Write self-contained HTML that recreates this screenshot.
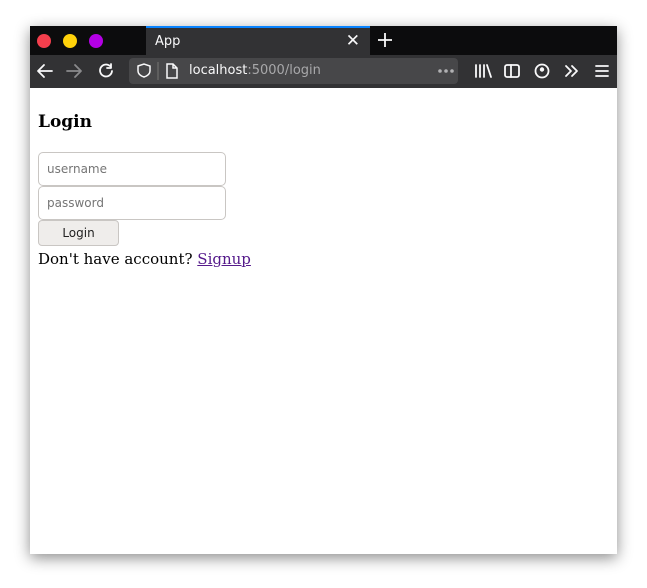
<!DOCTYPE html>
<html><head><style>
*{margin:0;padding:0;box-sizing:border-box}
body{width:647px;height:588px;background:#fff;position:relative;overflow:hidden;font-family:"DejaVu Sans","Liberation Sans",sans-serif}
.win{position:absolute;left:30px;top:26px;width:587px;height:528px;background:#fff;box-shadow:0 4px 14px rgba(0,0,0,.45)}
.tabs{position:absolute;left:0;top:0;width:587px;height:29px;background:#0c0c0d}
.dot{position:absolute;top:8px;width:14px;height:14px;border-radius:50%}
.tab{position:absolute;left:116px;top:0;width:224px;height:29px;background:#323234;border-top:2px solid #0a84ff;color:#f9f9fa;font-size:13px}
.tb{position:absolute;left:0;top:29px;width:587px;height:33px;background:#323234}
.url{position:absolute;left:99px;top:3px;width:329px;height:26px;background:#474749;border-radius:4px;color:#f9f9fa;font-size:13px}
.content{position:absolute;left:0;top:62px;width:587px;height:466px;font-family:"DejaVu Serif","Liberation Serif",serif}
input{position:absolute;left:8px;width:188px;height:34px;border:1px solid #c9c6c3;border-radius:5px;padding-left:8px;font:12px "DejaVu Sans",sans-serif;color:#888;background:#fff}
</style></head><body>
<div class="win">
 <div class="tabs">
  <div class="dot" style="left:7px;background:#f43f4d"></div>
  <div class="dot" style="left:33px;background:#ffd20a"></div>
  <div class="dot" style="left:59px;background:#b400e5"></div>
  <div class="tab"><span style="position:absolute;left:9px;top:6px">App</span><span style="position:absolute;right:10px;top:3px;font-size:17px">✕</span></div>
  <svg width="20" height="20" style="position:absolute;left:346px;top:5px" stroke="#f9f9fa" stroke-width="1.8"><path d="M9 2v14M2 9h14"/></svg>
 </div>
 <div class="tb">
  <svg width="587" height="33" style="position:absolute;left:0;top:0" fill="none" stroke-width="1.8" stroke-linecap="round" stroke-linejoin="round">
   <path d="M8 16h14M8 16l6-6M8 16l6 6" stroke="#f9f9fa"/>
   <path d="M37 16h14M51 16l-6-6M51 16l-6 6" stroke="#8a8a8c"/>
   <path d="M80 11a6 6 0 1 0 2 5M81 9v4h-4" stroke="#f9f9fa"/>
   <path d="M446 10v12M450 10v12M454 10v12M457 10l4 12" stroke="#f9f9fa"/>
   <rect x="475" y="10" width="14" height="12" rx="2" stroke="#f9f9fa"/><path d="M481 10v12" stroke="#f9f9fa"/>
   <circle cx="512" cy="16" r="6.5" stroke="#f9f9fa"/><circle cx="512" cy="14.5" r="2.2" fill="#f9f9fa"/>
   <path d="M536 11l5 5-5 5M542 11l5 5-5 5" stroke="#f9f9fa"/>
   <path d="M566 11h12M566 16h12M566 21h12" stroke="#f9f9fa"/>
  </svg>
  <div class="url">
   <svg width="329" height="26" style="position:absolute;left:0;top:0" fill="none" stroke="#f9f9fa" stroke-width="1.5">
    <path d="M9 8l6-2 6 2v5c0 3-3 5-6 6-3-1-6-3-6-6z"/>
    <path d="M29 4v18" stroke="#666"/>
    <path d="M38 6h6l4 4v10h-10z M44 6v4h4"/>
    <g fill="#b1b1b3" stroke="none"><circle cx="311" cy="13" r="1.8"/><circle cx="317" cy="13" r="1.8"/><circle cx="323" cy="13" r="1.8"/></g>
   </svg>
   <span style="position:absolute;left:60px;top:5px">localhost<span style="color:#a8a8aa">:5000/login</span></span>
  </div>
 </div>
 <div class="content">
  <div style="position:absolute;left:8px;top:24px;font-size:17px;font-weight:bold">Login</div>
  <input style="top:64px" placeholder="username">
  <input style="top:98px" placeholder="password">
  <div style="position:absolute;left:8px;top:132px;width:81px;height:26px;border:1px solid #c9c6c3;border-radius:4px;background:#efedeb;font:12px 'DejaVu Sans',sans-serif;text-align:center;line-height:24px;color:#222">Login</div>
  <div style="position:absolute;left:8px;top:162px;font-size:15px;white-space:nowrap">Don't have account? <span style="color:#551a8b;text-decoration:underline">Signup</span></div>
 </div>
</div>
</body></html>
